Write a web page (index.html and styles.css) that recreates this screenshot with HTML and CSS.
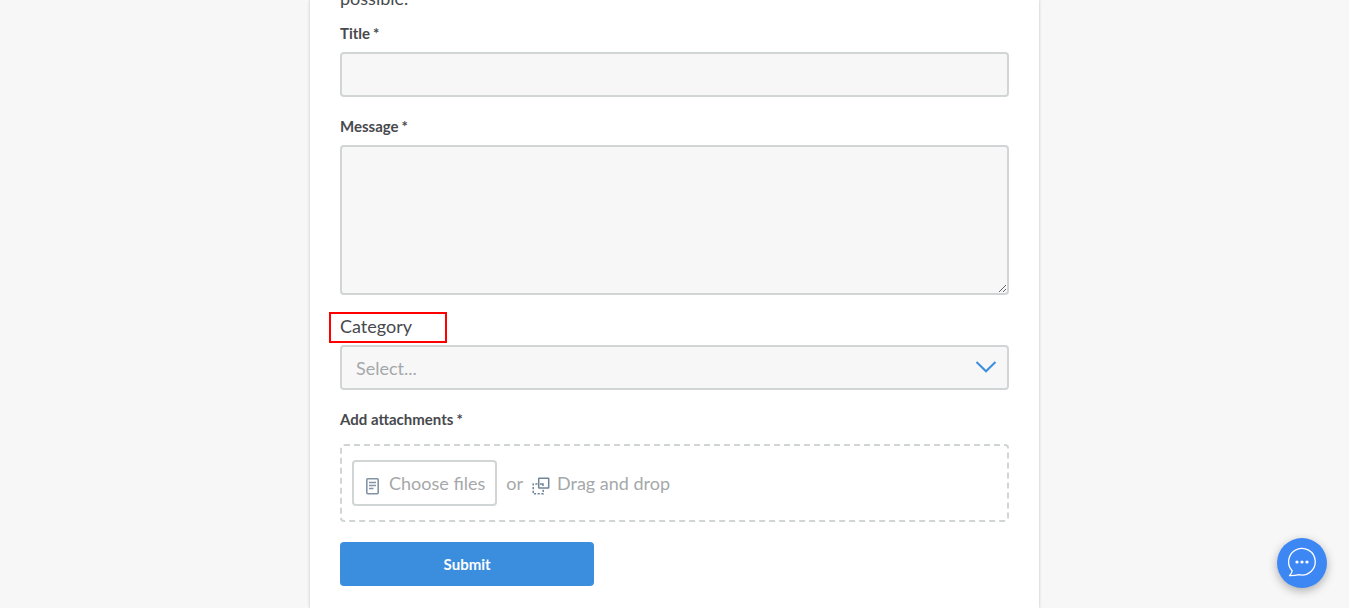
FILE: index.html
```
<!DOCTYPE html>
<html lang="en">
<head>
<meta charset="utf-8">
<meta name="viewport" content="width=device-width, initial-scale=1">
<title>Submit a request</title>
<link rel="stylesheet" href="styles.css">
</head>
<body>
<main class="card">
  <p class="intro">possible.</p>
  <form class="form">
    <div class="field">
      <label class="label" for="title">Title<span class="required">*</span></label>
      <input class="control" id="title" type="text">
    </div>
    <div class="field">
      <label class="label" for="message">Message<span class="required">*</span></label>
      <textarea class="control message" id="message"></textarea>
    </div>
    <div class="field category">
      <label class="category-label" for="category">Category</label>
      <div class="select-wrap">
        <select class="control select" id="category"><option>Select...</option></select>
        <svg class="chevron" width="22" height="14" viewBox="0 0 22 14" aria-hidden="true"><path d="M1.5 2 11 11.3 20.500 2" fill="none" stroke="#3b8ede" stroke-width="2"/></svg>
      </div>
    </div>
    <div class="field attachments">
      <label class="label" for="files">Add attachments<span class="required">*</span></label>
      <div class="dropzone">
        <button class="choose" id="files" type="button">
          <svg class="file-icon" width="15" height="18" viewBox="0 0 15 18" aria-hidden="true"><g fill="none" stroke="#8294a5"><rect x="1.800" y="1.800" width="11.400" height="15" rx="1" stroke-width="1.600"/><path d="M4 5.500h7M4 8.500h7M4 11.500h4.500" stroke-width="1.300"/></g></svg>
          <span>Choose files</span>
        </button>
        <span class="or">or</span>
        <svg class="drag-icon" width="18" height="18" viewBox="0 0 18 18" aria-hidden="true"><g fill="none" stroke="#708497" stroke-width="1.500"><rect x="6.700" y="1.200" width="10" height="9.800" rx=".5"/><path d="M5.500 7H1.200v9.800h10v-4.300" stroke-dasharray="2.200 1.500"/><path d="M8 7h3v2"/></g></svg>
        <span>Drag and drop</span>
      </div>
    </div>
    <button class="submit" type="submit">Submit</button>
  </form>
</main>
<button class="chat" type="button" aria-label="Open chat">
  <svg width="30" height="32" viewBox="0 0 30 32" aria-hidden="true"><path d="M5.200 23.800A13.300 13.300 0 1 1 12 27.700C9 28.500 6 28.600 2.500 28.700 4 27.200 5 25.800 5.200 23.800Z" fill="none" stroke="#fff" stroke-width="1.300" stroke-linejoin="round"/><g fill="#fff"><circle cx="10" cy="15" r="1.600"/><circle cx="15" cy="15" r="1.600"/><circle cx="20" cy="15" r="1.600"/></g></svg>
</button>
</body>
</html>
```
FILE: styles.css
```
*, *::before, *::after { box-sizing: border-box; }
body {
  margin: 0;
  min-height: 100vh;
  display: flex;
  justify-content: center;
  overflow: hidden;
  background: #f7f7f7;
  color: #47494d;
  font: 18px/22px Lato, sans-serif;
}
button, input, select, textarea { font: inherit; }
.card {
  width: 100%;
  max-width: 729px;
  padding: 0 30px 22px;
  background: #fff;
  box-shadow: 0 0 3px rgba(0, 0, 0, .22);
}
.intro { margin: -13px 0 14px; }
.form { display: flex; flex-direction: column; }
.field { display: flex; flex-direction: column; margin-bottom: 20px; }
.label {
  margin-bottom: 9px;
  font-size: 15px;
  line-height: 20px;
  font-weight: 700;
}
.field:has(.message) { margin-top: -1px; }
.required { margin-left: 3px; }
.control {
  width: 100%;
  height: 45px;
  padding: 0 14px;
  border: 2px solid #d1d5d5;
  border-radius: 4px;
  background: #f7f7f7;
  color: #a5a8aa;
}
.message { height: 150px; padding: 12px 14px; resize: vertical; }
.category-label {
  position: relative;
  align-self: flex-start;
  margin-bottom: 8px;
}
.category-label::after {
  content: "";
  position: absolute;
  top: -3px;
  left: -11px;
  width: 118px;
  height: 31px;
  border: 2px solid #f00;
}
.select-wrap { position: relative; }
.select { display: block; appearance: none; }
.chevron { position: absolute; right: 12px; top: 15px; pointer-events: none; }
.attachments { margin-top: -1px; }
.attachments .label { margin-bottom: 15px; }
.dropzone {
  display: flex;
  align-items: center;
  padding: 14px 10px;
  border: 2px dashed #d1d5d5;
  border-radius: 4px;
  color: #a5a8aa;
}
.choose {
  display: flex;
  align-items: center;
  gap: 9px;
  height: 46px;
  padding: 0 10px 0 11px;
  border: 2px solid #d1d5d5;
  border-radius: 4px;
  background: #fff;
  color: inherit;
}
.file-icon, .drag-icon { margin-top: 5px; }
.or { margin: 0 9px; }
.drag-icon { margin-right: 7px; }
.submit {
  width: 38%;
  height: 44px;
  border: 0;
  border-radius: 4px;
  background: #3b8dde;
  color: #fff;
  font-size: 15px;
  font-weight: 700;
}
.chat {
  position: fixed;
  right: 22px;
  bottom: 20px;
  display: flex;
  align-items: center;
  justify-content: center;
  width: 50px;
  height: 50px;
  padding: 0;
  border: 0;
  border-radius: 50%;
  background: #3d87f5;
  box-shadow: 0 3px 10px rgba(0, 0, 0, .3);
}
```
